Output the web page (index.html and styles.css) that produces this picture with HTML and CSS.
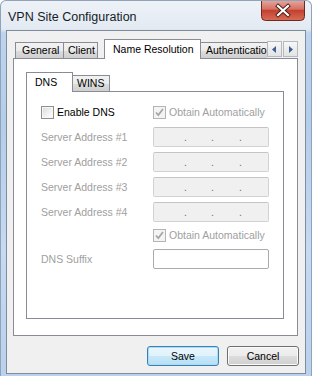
FILE: index.html
```html
<!DOCTYPE html>
<html lang="en">
<head>
    <meta charset="UTF-8">
    <title>VPN Site Configuration</title>
    <link rel="stylesheet" href="styles.css">
</head>
<body>
    <div class="window">
        <div class="titlebar">
            <span class="title">VPN Site Configuration</span>
            <div class="close-btn">
                <svg width="44" height="21" viewBox="0 0 44 21">
                    <defs>
                        <linearGradient id="red" x1="0" y1="0" x2="0" y2="1">
                            <stop offset="0" stop-color="#e8a89e"/>
                            <stop offset="0.45" stop-color="#d47163"/>
                            <stop offset="0.5" stop-color="#c2402f"/>
                            <stop offset="1" stop-color="#d96c55"/>
                        </linearGradient>
                    </defs>
                    <path d="M0.5 0 V16.5 Q0.5 20.5 4.5 20.5 H39.5 Q43.5 20.5 43.5 16.5 V0" fill="url(#red)" stroke="#6d2a22"/>
                    <path d="M17 6 L27 15 M27 6 L17 15" stroke="#4a1c16" stroke-width="4" stroke-linecap="square"/>
                    <path d="M17 6 L27 15 M27 6 L17 15" stroke="#ffffff" stroke-width="2.2" stroke-linecap="square"/>
                </svg>
            </div>
        </div>

        <div class="client">
            <div class="tabs">
                <div class="tab">General</div>
                <div class="tab tab-joined">Client</div>
                <div class="tab tab-active">Name Resolution</div>
                <div class="tab-clip">
                    <div class="tab">Authentication</div>
                </div>
                <div class="tab-arrows">
                    <div class="arrow-btn">
                        <svg width="5" height="7" viewBox="0 0 5 7"><path d="M4 0 V7 L0 3.5 Z" fill="#3f5f94"/></svg>
                    </div>
                    <div class="arrow-btn">
                        <svg width="5" height="7" viewBox="0 0 5 7"><path d="M1 0 V7 L5 3.5 Z" fill="#3f5f94"/></svg>
                    </div>
                </div>
            </div>

            <div class="panel">
                <div class="tabs tabs-inner">
                    <div class="tab tab-active tab-dns">DNS</div>
                    <div class="tab tab-joined tab-wins">WINS</div>
                </div>

                <div class="inner-panel">
                    <div class="row row-check">
                        <div class="col-label">
                            <span class="cb"></span>
                            <span class="cb-text">Enable DNS</span>
                        </div>
                        <div class="col-field">
                            <span class="cb cb-disabled">
                                <svg width="11" height="11" viewBox="0 0 11 11"><path d="M2 5.5 L4.3 8 L9 2" fill="none" stroke="#a6a6a6" stroke-width="1.8"/></svg>
                            </span>
                            <span class="cb-text muted">Obtain Automatically</span>
                        </div>
                    </div>

                    <div class="row row-first">
                        <div class="col-label muted">Server Address #1</div>
                        <div class="ip-box"><span class="dot d1">.</span><span class="dot d2">.</span><span class="dot d3">.</span></div>
                    </div>
                    <div class="row">
                        <div class="col-label muted">Server Address #2</div>
                        <div class="ip-box"><span class="dot d1">.</span><span class="dot d2">.</span><span class="dot d3">.</span></div>
                    </div>
                    <div class="row">
                        <div class="col-label muted">Server Address #3</div>
                        <div class="ip-box"><span class="dot d1">.</span><span class="dot d2">.</span><span class="dot d3">.</span></div>
                    </div>
                    <div class="row">
                        <div class="col-label muted">Server Address #4</div>
                        <div class="ip-box"><span class="dot d1">.</span><span class="dot d2">.</span><span class="dot d3">.</span></div>
                    </div>

                    <div class="row row-check row-obtain">
                        <div class="col-label"></div>
                        <div class="col-field">
                            <span class="cb cb-disabled">
                                <svg width="11" height="11" viewBox="0 0 11 11"><path d="M2 5.5 L4.3 8 L9 2" fill="none" stroke="#a6a6a6" stroke-width="1.8"/></svg>
                            </span>
                            <span class="cb-text muted">Obtain Automatically</span>
                        </div>
                    </div>

                    <div class="row row-suffix">
                        <div class="col-label muted">DNS Suffix</div>
                        <div class="text-box"></div>
                    </div>
                </div>
            </div>

            <div class="buttons">
                <button class="btn btn-default">Save</button>
                <button class="btn">Cancel</button>
            </div>
        </div>
    </div>
</body>
</html>
```

FILE: styles.css
```css
body, html {
    margin: 0;
    padding: 0;
    background: #ffffff;
    font-family: "Liberation Sans", Arial, sans-serif;
    font-size: 10.5px;
    color: #000000;
}
.window {
    width: 312px;
    height: 376px;
    box-sizing: border-box;
    border-radius: 6px 6px 0 0;
    border: 1px solid #8fa3bb;
    border-bottom: none;
    background: linear-gradient(to bottom, #eef2f7 0, #e3eaf2 28px, #bdd4ee 32px, #b4cde9 120px, #c6daf1 250px, #b9d1ec 376px);
    overflow: hidden;
}
.titlebar {
    height: 29px;
    display: flex;
    align-items: flex-start;
}
.title {
    margin: 9px 0 0 7px;
    font-size: 12.5px;
    line-height: 14px;
    color: #151c28;
}
.close-btn {
    margin-left: auto;
    margin-right: 6px;
    margin-top: -1px;
    height: 21px;
}
.close-btn svg {
    display: block;
}

/* area interna */
.client {
    margin: 0 5px 0 5px;
    height: 344px;
    box-sizing: border-box;
    border: 1px solid #7f8c9c;
    background: #f0f0f0;
}
.tabs {
    height: 27px;
    padding-left: 8px;
    display: flex;
    align-items: flex-end;
}
.tab {
    position: relative;
    height: 16px;
    box-sizing: border-box;
    padding: 0 6px;
    border: 1px solid #898c95;
    border-bottom: none;
    background: linear-gradient(to bottom, #f2f2f2 0%, #ebebeb 50%, #dddddd 51%, #cfcfcf 100%);
    line-height: 15px;
    white-space: nowrap;
    flex-shrink: 0;
}
.tab-joined {
    margin-left: -1px;
}
.tab:nth-child(1) {
    width: 49px;
}
.tab:nth-child(2) {
    width: 35px;
    padding: 0 4px;
}
.tab-active {
    z-index: 1;
    height: 20px;
    margin-bottom: -1px;
    margin-left: 6px;
    width: 97px;
    padding: 2px 0 0 8px;
    line-height: 15px;
    background: #ffffff;
}
.tab-clip {
    width: 66px;
    overflow: hidden;
    display: flex;
    flex-shrink: 0;
}
.tab-clip .tab {
    width: auto;
    padding: 0 5px;
    border-left: none;
    border-right: none;
}
.tab-arrows {
    display: flex;
    gap: 1px;
    margin-bottom: 1px;
}
.arrow-btn {
    width: 15px;
    height: 16px;
    box-sizing: border-box;
    border: 1px solid #b5b9c0;
    background: linear-gradient(to bottom, #f7f7f7, #e3e3e3);
    display: flex;
    align-items: center;
    justify-content: center;
}

.panel {
    margin-left: 6px;
    width: 285px;
    height: 278px;
    box-sizing: border-box;
    border: 1px solid #898c95;
    background: #ffffff;
}
.tabs-inner {
    height: 32px;
    padding-left: 12px;
}
.tabs-inner .tab-dns {
    margin-left: 0;
    width: 47px;
    padding: 2px 0 0 8px;
}
.tabs-inner .tab-wins {
    width: 38px;
    padding: 0 0 0 4px;
}
.inner-panel {
    margin-left: 12px;
    width: 258px;
    height: 228px;
    box-sizing: border-box;
    border: 1px solid #898c95;
    padding: 12px 0 0 14px;
}
.row {
    display: flex;
    align-items: center;
    height: 20px;
    margin-top: 5px;
}
.row-check {
    height: 16px;
    margin-top: 0;
}
.row-first {
    margin-top: 7px;
}
.row-obtain {
    margin-top: 5px;
}
.row-suffix {
    margin-top: 6px;
}
.col-label {
    width: 112px;
    display: flex;
    align-items: center;
    white-space: nowrap;
}
.col-field {
    display: flex;
    align-items: center;
    white-space: nowrap;
}
.muted {
    color: #a0a0a0;
}
.cb {
    width: 13px;
    height: 13px;
    box-sizing: border-box;
    border: 1px solid #8e8f8f;
    background: linear-gradient(135deg, #d9d9d9 0%, #f3f3f3 60%, #ffffff 100%);
    box-shadow: inset 0 0 0 1px #f6f6f6;
    display: flex;
    align-items: center;
    justify-content: center;
}
.cb-disabled {
    border-color: #b4b4b4;
    background: #f4f4f4;
    box-shadow: none;
}
.cb-text {
    margin-left: 3px;
    line-height: 16px;
}
.ip-box {
    width: 116px;
    height: 20px;
    box-sizing: border-box;
    border: 1px solid #d2d2d2;
    border-top-color: #c4c4c4;
    border-radius: 2px;
    background: #f0f0f0;
    display: flex;
    line-height: 18px;
    color: #6d6d6d;
}
.dot {
    width: 3px;
    text-align: center;
}
.d1 { margin-left: 30px; }
.d2 { margin-left: 24px; }
.d3 { margin-left: 25px; }
.text-box {
    width: 116px;
    height: 20px;
    box-sizing: border-box;
    border: 1px solid #ababab;
    border-radius: 2px;
    background: #ffffff;
}

.buttons {
    display: flex;
    justify-content: flex-end;
    gap: 8px;
    padding-right: 6px;
    margin-top: 10px;
}
.btn {
    width: 72px;
    height: 20px;
    box-sizing: border-box;
    border: 1px solid #707070;
    border-radius: 3px;
    background: linear-gradient(to bottom, #f2f2f2 0%, #ebebeb 50%, #dddddd 51%, #cfcfcf 100%);
    box-shadow: inset 0 0 0 1px #fbfbfb;
    font-family: "Liberation Sans", Arial, sans-serif;
    font-size: 10.5px;
    color: #000000;
    padding: 0;
}
.btn-default {
    border-color: #3c7fb1;
    background: linear-gradient(to bottom, #eaf6fd 0%, #dff2fc 50%, #c8e8f9 51%, #b6dff5 100%);
    box-shadow: inset 0 0 0 1px #a6def7;
}
```
